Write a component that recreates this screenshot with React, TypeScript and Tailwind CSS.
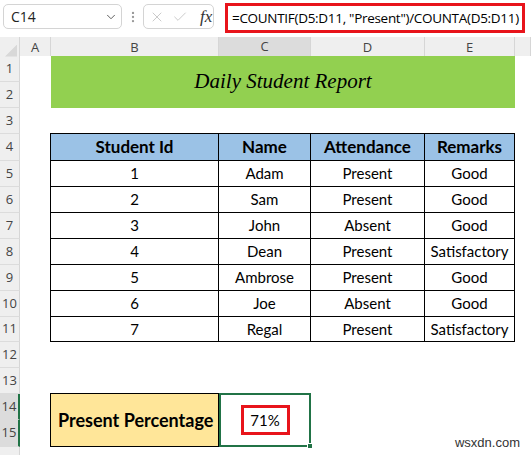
import { ChevronDown, X, Check, EllipsisVertical } from "lucide-react";

const cols = ["A", "B", "C", "D", "E", ""];

const rows = [
  { id: 1, name: "Adam", att: "Present", rem: "Good" },
  { id: 2, name: "Sam", att: "Present", rem: "Good" },
  { id: 3, name: "John", att: "Absent", rem: "Good" },
  { id: 4, name: "Dean", att: "Present", rem: "Satisfactory" },
  { id: 5, name: "Ambrose", att: "Present", rem: "Good" },
  { id: 6, name: "Joe", att: "Absent", rem: "Good" },
  { id: 7, name: "Regal", att: "Present", rem: "Satisfactory" },
];

const rowHeights = [26, 26, 26, 27, 26, 26, 26, 26, 26, 26, 25, 26, 26, 26, 27, 26];

const cellFont = { fontFamily: "Lato, 'Open Sans', sans-serif" };

function FormulaBar() {
  return (
    <div className="h-[37px] flex items-start bg-white px-[3px] pt-[4px]" style={{ fontFamily: "'Open Sans', 'Noto Sans', sans-serif" }}>
      <div className="w-[119px] h-[25px] rounded-[5px] border border-[#d4d4d4] flex items-center justify-between pl-[7px] pr-[3px] text-[14px] text-[#222]">
        <span>C14</span>
        <ChevronDown size={14} strokeWidth={1.6} className="text-[#555]" />
      </div>
      <div className="w-[21px] h-[25px] flex items-center justify-center">
        <EllipsisVertical size={14} className="text-[#999]" />
      </div>
      <div className="w-[71px] h-[25px] rounded-[5px] border border-[#d4d4d4] flex items-center pl-[5px] gap-[7px]">
        <X size={16} strokeWidth={1.2} className="text-[#bdbdbd]" />
        <Check size={16} strokeWidth={1.2} className="text-[#bdbdbd]" />
        <span className="ml-[5px] text-[17px] italic text-[#333]" style={{ fontFamily: "'Liberation Serif', serif" }}>
          fx
        </span>
      </div>
      <div className="ml-[11px] -mt-[1px] w-[300px] h-[30px] border-[3px] border-[#e8141b] flex items-center pl-[4px] text-[13.5px] tracking-[-0.3px] text-black whitespace-nowrap overflow-hidden">
        =COUNTIF(D5:D11, "Present")/COUNTA(D5:D11)
      </div>
    </div>
  );
}

function ColumnHeaders() {
  return (
    <div className="grid grid-cols-[20px_31px_168px_92px_114px_90px_1fr] h-[19px] bg-[#efefef] text-[13px] text-[#444]" style={{ fontFamily: "'Open Sans', sans-serif" }}>
      <div className="relative border-r border-[#d6d6d6]">
        <div
          className="absolute right-[2px] bottom-[2px] w-[12px] h-[12px] bg-[#d8d8d8]"
          style={{ clipPath: "polygon(100% 0, 100% 100%, 0 100%)" }}
        />
      </div>
      {cols.map((c) => (
        <div
          key={c || "F"}
          className={`flex items-center justify-center border-r border-[#d6d6d6] ${
            c === "C" ? "bg-[#dcdcdc] border-b-2 border-b-[#217346]" : ""
          }`}
        >
          {c}
        </div>
      ))}
    </div>
  );
}

function RowHeaders() {
  return (
    <div className="flex flex-col bg-[#efefef] text-[13px] text-[#444]" style={{ fontFamily: "'Open Sans', sans-serif" }}>
      {rowHeights.map((h, i) => {
        const sel = i === 13 || i === 14;
        return (
          <div
            key={i}
            style={{ height: h }}
            className={`flex items-center justify-center border-b border-[#dcdcdc] ${
              sel ? "bg-[#dcdcdc] border-r-2 border-r-[#217346]" : "border-r border-r-[#d6d6d6]"
            }`}
          >
            {i < 15 ? i + 1 : ""}
          </div>
        );
      })}
    </div>
  );
}

function StudentTable() {
  return (
    <div className="grid grid-cols-[168px_92px_114px_90px] grid-rows-[27px_repeat(6,26px)_25px] border-l border-t border-black -ml-px -mt-px text-black" style={cellFont}>
      {["Student Id", "Name", "Attendance", "Remarks"].map((h) => (
        <div key={h} className="bg-[#9bc2e6] border-r border-b border-black flex items-center justify-center text-[17px] font-bold">
          {h}
        </div>
      ))}
      {rows.map((r) =>
        [r.id, r.name, r.att, r.rem].map((v, j) => (
          <div key={`${r.id}-${j}`} className="border-r border-b border-black flex items-center justify-center text-[15px]">
            {v}
          </div>
        ))
      )}
    </div>
  );
}

function Sheet() {
  return (
    <div className="flex-1 grid grid-cols-[31px_168px_92px_114px_90px_1fr] grid-rows-[26px_26px_26px_27px_26px_26px_26px_26px_26px_26px_25px_26px_26px_26px_27px_26px] bg-white">
      <div className="col-start-2 col-span-4 row-start-1 row-span-2 bg-[#92d050] flex items-center justify-center text-[21px] italic text-black" style={{ fontFamily: "'Liberation Serif', serif" }}>
        Daily Student Report
      </div>
      <div className="col-start-2 col-span-4 row-start-4 row-span-8">
        <StudentTable />
      </div>
      <div className="col-start-2 row-start-14 row-span-2 bg-[#ffe699] border border-black -ml-px -mt-px flex items-center pl-[7px] text-[18px] font-bold text-black" style={cellFont}>
        Present Percentage
      </div>
      <div className="relative col-start-3 row-start-14 row-span-2 -mt-px border-2 border-[#217346] flex items-center justify-center">
        <div className="w-[49px] h-[30px] border-[3px] border-[#e8141b] flex items-center justify-center text-[15px] text-black" style={cellFont}>
          71%
        </div>
        <div className="absolute -right-[4px] -bottom-[4px] w-[6px] h-[6px] bg-[#217346] border border-white" />
      </div>
    </div>
  );
}

export default function App() {
  return (
    <div className="relative w-[531px] h-[455px] overflow-hidden bg-white">
      <FormulaBar />
      <ColumnHeaders />
      <div className="flex">
        <div className="w-[20px]">
          <RowHeaders />
        </div>
        <Sheet />
      </div>
      <div className="absolute right-[11px] bottom-[3px] text-[13px] text-[#333]" style={{ fontFamily: "'Liberation Sans', Arial, sans-serif" }}>
        wsxdn.com
      </div>
    </div>
  );
}
